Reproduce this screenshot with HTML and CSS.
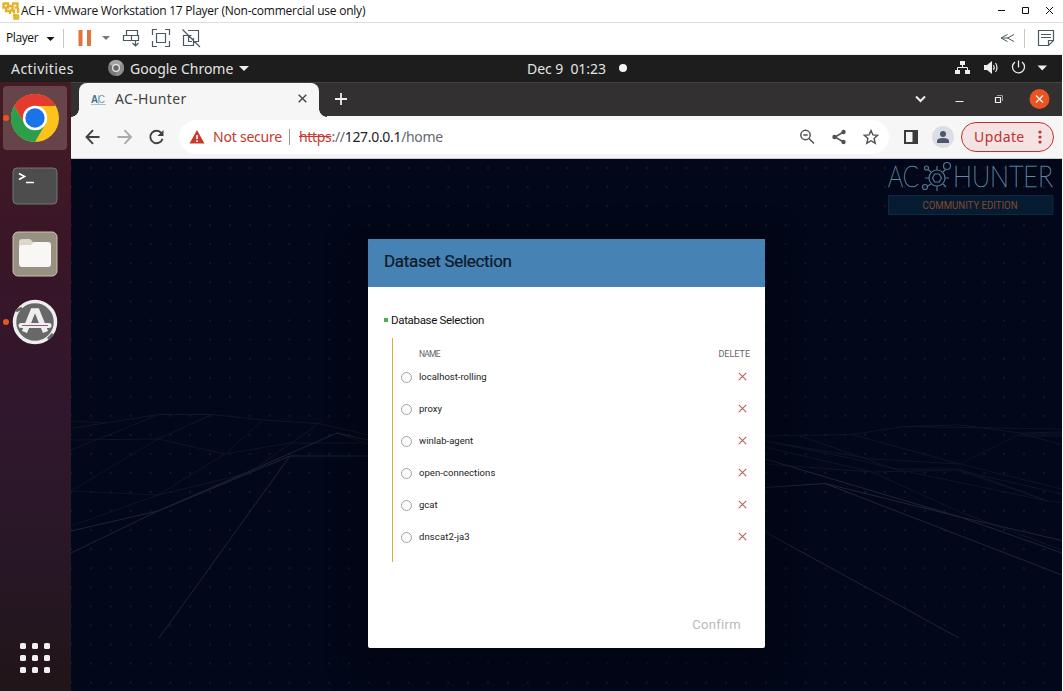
FILE: index.html
```
<!DOCTYPE html>
<html lang="en">
<head>
<meta charset="utf-8">
<title>ACH - VMware Workstation 17 Player</title>
<link rel="stylesheet" href="styles.css">
</head>
<body>
<div class="vm">
  <header class="titlebar">
    <svg class="vm-logo" width="18" height="18" viewBox="0 0 18 18"><path d="M1 1.500H6V5.500H1.500V1M6 4H10.500V8M10 1.500H15.500V5.500H12.500M4 6V9H8V12M8 8.500H12V11.500M16 6V11M11 13.500H16V16.500H12.500V12" fill="none" stroke="#e3b32a" stroke-width="2.400"/></svg>
    <span class="title">ACH - VMware Workstation 17 Player (Non-commercial use only)</span>
    <svg class="win-controls" width="60" height="22" viewBox="0 0 60 22" fill="none" stroke="#111"><path d="M0 10.500H7M24.500 7.500H30.500V13.500H24.500ZM48 7L55 14M55 7L48 14"/></svg>
  </header>
  <div class="vm-toolbar">
    <span class="player">Player</span>
    <svg class="tools" width="164" height="31" viewBox="0 0 164 31" fill="none">
      <path d="M6.500 14H14.500L10.500 18Z" fill="#111"/>
      <path d="M23.500 6V25" stroke="#c6c6c6"/>
      <path d="M38.500 7H42.500V23H38.500ZM47 7H51V23H47Z" fill="#e2733a"/>
      <path d="M62 13H70L66 17Z" fill="#777"/>
      <g stroke="#4a5860" stroke-width="1.200"><path d="M86.500 7.500H97.500V12.500H86.500ZM83.500 12.500H91.500V17.500H83.500ZM91.500 12.500H98.500V17.500H91.500ZM95.500 18V23M92.500 20L95.500 23L98.500 20"/>
      <path d="M112.500 12V6.500H117M125 6.500H129.500V12M129.500 18V23.500H125M117 23.500H112.500V18M116.500 10.500H125.500V19.500H116.500Z"/>
      <path d="M148 7.500H158.500V18.500H155M151.500 12.500H143.500V22.500H153.500V15M148.500 12V18.500H152M142.500 6.500L160 24"/></g>
    </svg>
    <svg class="tools-right" width="55" height="31" viewBox="0 0 55 31" fill="none" stroke="#4a5860"><path d="M7.500 11.500L1 15L7.500 18.500M14 11.500L7.500 15L14 18.500M1 15H8"/><path d="M24.500 6V25" stroke="#c6c6c6"/><path d="M38.500 7.500H53.500V17.500L48.500 22.500H38.500ZM48.500 22.500V17.500H53.500M41 11.500H51M41 14.500H51" stroke-width="1.200"/></svg>
  </div>
  <div class="gnome-bar">
    <span class="activities">Activities</span>
    <svg class="app-mark" width="16" height="16" viewBox="0 0 16 16"><circle cx="8" cy="8" r="8" fill="#777"/><path d="M8 8L1 4A8 8 0 0 1 15 4Z" fill="#a3a3a3"/><path d="M8 8L15 4A8 8 0 0 1 8 16Z" fill="#8d8d8d"/><circle cx="8" cy="8" r="4" fill="#e5e5e5"/><circle cx="8" cy="8" r="2.700" fill="#686868"/></svg>
    <span class="app-name">Google Chrome</span><i class="caret"></i>
    <span class="clock">Dec 9&nbsp; 01:23</span><i class="notice"></i>
    <svg class="status" width="94" height="20" viewBox="0 0 94 20" fill="none" stroke="#eee">
      <path d="M6 3H11V7H6ZM1 12H6V16H1ZM11 12H16V16H11Z" fill="#eee" stroke="none"/><path d="M8.500 7V9.500M3.500 12V9.500H13.500V12"/>
      <path d="M30 7H33L38 3V16L33 12H30Z" fill="#eee" stroke="none"/><path d="M39.500 7Q41 9.500 39.500 12M41.500 5Q44.500 9.500 41.500 14" stroke-width="1.100"/>
      <path d="M61 4A6 6 0 1 0 68 4M64.500 2.500V9.500" stroke-width="1.300"/><path d="M83.500 7.500H93L88.300 12.500Z" fill="#eee" stroke="none"/>
    </svg>
  </div>
  <div class="desktop">
    <nav class="dock">
      <div class="launcher active running"><svg width="48" height="48" viewBox="0 0 48 48"><circle cx="24" cy="24" r="24" fill="#fcc31b"/><path d="M24 12H44.800A24 24 0 0 0 3.200 12L13.600 30L24 24Z" fill="#e33b2e"/><path d="M3.200 12A24 24 0 0 0 24 48L34.400 30L24 24L13.600 30Z" fill="#2b9f4b"/><circle cx="24" cy="24" r="12.200" fill="#fff"/><circle cx="24" cy="24" r="9.700" fill="#1a73e8"/></svg></div>
      <div class="launcher"><svg width="46" height="38" viewBox="0 0 46 38"><rect x="1" y="1" width="44" height="36" rx="4" fill="#4d4d4d" stroke="#747474"/><path d="M7 6.500L12.500 9.500L7 12.500M14 15.500H22" fill="none" stroke="#fff" stroke-width="1.700"/></svg></div>
      <div class="launcher"><svg width="46" height="46" viewBox="0 0 46 46"><rect x="1" y="1" width="44" height="44" rx="5" fill="#989080" stroke="#c9c3b0"/><path d="M7 20V11Q7 8 10 8H18L22 12H36V20Z" fill="#ddd8cc"/><path d="M10 14H19L22 11H36Q39 11 39 14V33Q39 36 36 36H10Q7 36 7 33V17Q7 14 10 14Z" fill="#f8f7f5"/></svg></div>
      <div class="launcher running"><svg width="46" height="46" viewBox="0 0 46 46"><circle cx="23" cy="23" r="20.500" fill="#686868" stroke="#eee" stroke-width="3.500"/><path d="M4 12L10 9M36 40L41 35" stroke="#666" stroke-width="3"/><path d="M12.500 33L21 12H25L33.500 33" fill="none" stroke="#eee" stroke-width="5.500"/><path d="M9 26.500H37" stroke="#eee" stroke-width="5" stroke-linecap="round"/><path d="M10 26.500H36" stroke="#965988" stroke-width="1"/></svg></div>
      <div class="apps"><i></i><i></i><i></i><i></i><i></i><i></i><i></i><i></i><i></i></div>
    </nav>
    <section class="browser">
      <div class="tabstrip">
        <div class="tab">
          <svg class="favicon" width="17" height="14" viewBox="0 0 17 14"><text x="1" y="11" textLength="14" lengthAdjust="spacingAndGlyphs" class="fav-text"><tspan class="fav-a">A</tspan>C</text><path d="M1 12.500H16M8.500 3V13" stroke="#94abb5" stroke-width=".7"/></svg>
          <span class="tab-title">AC-Hunter</span>
          <svg width="9" height="9" viewBox="0 0 9 9"><path d="M.7.7L8.300 8.300M8.300.7L.7 8.300" stroke="#444" stroke-width="1.400"/></svg>
        </div>
        <svg class="new-tab" width="12" height="12" viewBox="0 0 12 12"><path d="M6 0V12M0 6H12" stroke="#eee" stroke-width="1.800"/></svg>
        <svg class="tab-controls" width="138" height="34" viewBox="0 0 138 34" fill="none" stroke="#eee"><path d="M1 14.500L5.500 19L10 14.500" stroke-width="2"/><path d="M40.500 19.500H48.500M80.500 15.500H85.500V20.500H80.500Z" stroke-width="1.200"/><path d="M82 13.500H87.500V19" stroke="#999"/><circle cx="124.500" cy="17" r="10" fill="#e95420" stroke="none"/><path d="M121 13.500L128 20.500M128 13.500L121 20.500" stroke-width="1.400"/></svg>
      </div>
      <div class="navbar">
        <svg class="nav-icons" width="80" height="16" viewBox="0 0 80 16" fill="none" stroke="#3f4043" stroke-width="1.900"><path d="M14.500 8H1.500M8 1.200L1.500 8L8 14.800"/><path d="M32.500 8H46M39.500 1.200L46 8L39.500 14.800" stroke="#a9abad"/><path d="M76.500 4.300A6.200 6.200 0 1 0 77.500 9.700"/><path d="M72.500 7H78.500V1Z" fill="#3f4043" stroke="none"/></svg>
        <div class="omnibox">
          <svg width="16" height="14" viewBox="0 0 16 14"><path d="M8 0L15.500 13.500H.5Z" fill="#c5392e"/><path d="M8 5V9M8 10.200V12" stroke="#fff" stroke-width="1.600"/></svg>
          <span class="unsafe">Not secure</span><i class="divider"></i>
          <span class="url"><s>https</s><span class="path">://</span>127.0.0.1<span class="path">/home</span></span>
          <svg class="url-icons" width="80" height="18" viewBox="0 0 80 18" fill="none" stroke="#505356" stroke-width="1.500"><circle cx="6.500" cy="7" r="4.700"/><path d="M10 10.500L15 15.500M4.300 7H8.700"/><path d="M44.500 4L36 9L44.500 14"/><g fill="#505356" stroke="none"><circle cx="44.500" cy="4" r="2.200"/><circle cx="35.500" cy="9" r="2.200"/><circle cx="44.500" cy="14" r="2.200"/></g><path d="M72 2.500L73.900 6.900L78.700 7.300L75.100 10.500L76.200 15.200L72 12.700L67.800 15.200L68.900 10.500L65.300 7.300L70.100 6.900Z" stroke-width="1.400"/></svg>
        </div>
        <svg class="panel" width="14" height="14" viewBox="0 0 14 14"><path d="M0 0H14V14H0ZM2 2V12H8.500V2Z" fill="#3b3c3e" fill-rule="evenodd"/></svg>
        <svg class="avatar" width="22" height="22" viewBox="0 0 22 22"><circle cx="11" cy="11" r="11" fill="#dbdfe5"/><circle cx="11" cy="8" r="3" fill="#4d566a"/><path d="M5 17V15Q5 12 11 12T17 15V17Z" fill="#4d566a"/></svg>
        <div class="update"><span>Update</span><svg width="4" height="14" viewBox="0 0 4 14" fill="#c32f2b"><circle cx="2" cy="2" r="1.600"/><circle cx="2" cy="7" r="1.600"/><circle cx="2" cy="12" r="1.600"/></svg></div>
      </div>
      <main class="page">
        <svg class="terrain" width="991" height="532" viewBox="71 159 991 532" fill="none">
          <defs><pattern id="dots" x="81" y="158.500" width="19.850" height="19.060" patternUnits="userSpaceOnUse"><path d="M9 9.500H11M10 8.500V10.500" stroke="#162230" stroke-width=".8"/></pattern></defs>
          <path fill="url(#dots)" d="M71 159H1062V691H71Z"/>
          <g stroke="#0d1725"><path d="M71 421L106 423M71 428.500L158 414.500H212L263 420L319 423.500L368 435M71 440L158 439L225 454L290 443H368M71 450L158 415M71 491L158 439L212 414.500M71 491L158 495L225 454L263 420M71 526L158 495L249 473L319 423.500M337 433L368 444"/><path d="M765 436L852 434.500L904 426.500L960 425L1020 433L1062 445M904 426.500L1062 429M1062 434H1020L960 464L852 434.500M765 441L850 458L895 469H960L1048 501M800 436L895 469M765 447L872 472L960 512L1062 550M765 464L872 472L957 470L1062 494M765 441L872 459L960 464L1062 489M957 470L1048 501L1062 502.500M895 469L1048 501M1020 433L1062 432M1020 436L1062 436"/></g>
          <g stroke="#1b2734"><path d="M71 531L158 511L337 433L368 440M71 553L158 511L290 456H368M290 456L159 638"/><path d="M765 487.500L825 483.500L1062 575M825 483.500L960 517L1062 540.500M765 459L960 517L1062 553M765 532L959 638"/></g>
        </svg>
        <svg class="brand" width="175" height="58" viewBox="887 159 175 58">
          <g class="brand-word"><text x="888" y="187" textLength="31" lengthAdjust="spacingAndGlyphs">AC</text><text x="953" y="187" textLength="100" lengthAdjust="spacingAndGlyphs">HUNTER</text></g>
          <g fill="none" stroke="#55758f" stroke-width="1.200"><circle cx="937" cy="178" r="8"/><path d="M932.500 178L934.700 174H939.300L941.500 178L939.300 182H934.700ZM937 166V170M937 186V191M925 178H929M945 178H949M943 172L945.500 169.500M931 184L927 186.500M943 184L946 187M931 172L928 169.500"/><circle cx="947" cy="166" r="3.500"/><circle cx="926.500" cy="168" r="2"/><circle cx="925" cy="187" r="2.500"/></g>
          <path d="M888.500 195.500H1053V214.500H888.500Z" fill="#061c32" stroke="#0b2b41"/>
          <text class="edition" x="922.500" y="208.500" textLength="95" lengthAdjust="spacingAndGlyphs">COMMUNITY EDITION</text>
        </svg>
        <div class="dialog">
          <h1>Dataset Selection</h1>
          <div class="dialog-body">
            <h2><i></i><span>Database Selection</span></h2>
            <div class="datasets">
              <div class="head"><span class="h-name">NAME</span><span class="h-del">DELETE</span></div>
              <div class="row"><i class="radio"></i><span class="r1">localhost-rolling</span><svg width="9" height="9" viewBox="0 0 9 9"><path d="M.8.8L8.200 8.200M8.200.8L.8 8.200"/></svg></div>
              <div class="row"><i class="radio"></i><span class="r2">proxy</span><svg width="9" height="9" viewBox="0 0 9 9"><path d="M.8.8L8.200 8.200M8.200.8L.8 8.200"/></svg></div>
              <div class="row"><i class="radio"></i><span class="r3">winlab-agent</span><svg width="9" height="9" viewBox="0 0 9 9"><path d="M.8.8L8.200 8.200M8.200.8L.8 8.200"/></svg></div>
              <div class="row"><i class="radio"></i><span class="r4">open-connections</span><svg width="9" height="9" viewBox="0 0 9 9"><path d="M.8.8L8.200 8.200M8.200.8L.8 8.200"/></svg></div>
              <div class="row"><i class="radio"></i><span class="r5">gcat</span><svg width="9" height="9" viewBox="0 0 9 9"><path d="M.8.8L8.200 8.200M8.200.8L.8 8.200"/></svg></div>
              <div class="row"><i class="radio"></i><span class="r6">dnscat2-ja3</span><svg width="9" height="9" viewBox="0 0 9 9"><path d="M.8.8L8.200 8.200M8.200.8L.8 8.200"/></svg></div>
            </div>
            <div class="confirm">Confirm</div>
          </div>
        </div>
      </main>
    </section>
  </div>
</div>
</body>
</html>
```
FILE: styles.css
```
* { box-sizing: border-box; }
body { margin: 0; background: #fff; overflow: hidden; }
svg { display: block; flex: none; }
span { white-space: nowrap; }
.vm { width: 1063px; height: 691px; display: flex; flex-direction: column; }
.titlebar { height: 23px; display: flex; align-items: center; padding-left: 2px; border-bottom: 1px solid #dedede; }
.title { margin-left: 1px; font: 12px/22px "Open Sans", sans-serif; letter-spacing: -.23px; color: #111; }
.win-controls { margin-left: auto; margin-right: 5px; }
.vm-toolbar { height: 32px; display: flex; padding-left: 6px; border-bottom: 1px solid #eee; }
.player { width: 34px; font: 12px/30px "Open Sans", sans-serif; letter-spacing: -.4px; color: #111; }
.tools-right { margin-left: auto; margin-right: 8px; }
.gnome-bar { height: 27px; width: 1062px; background: #1d1d1d; color: #e4e4e4; display: flex; align-items: center; padding: 0 0 1px 11px; font: 14px/26px "Noto Sans", sans-serif; }
.gnome-bar span { padding-top: 1px; }
.activities { width: 97px; letter-spacing: .45px; }
.app-name { margin-left: 6px; width: 104px; }
.caret { margin-left: 5px; border: 5px solid transparent; border-top-color: #eee; border-bottom: 0; }
.clock { margin-left: 278px; width: 80px; letter-spacing: -.05px; }
.notice { width: 8px; height: 8px; border-radius: 50%; background: #f2f2f2; margin-left: 12px; }
.status { margin-left: auto; margin-right: 14px; }
.desktop { flex: 1; display: flex; width: 1062px; }
.dock { width: 71px; background: linear-gradient(#451c24, #391527 28%, #30172d 55%, #271725 80%, #201519); display: flex; flex-direction: column; align-items: center; padding: 4px 1px 18px 0; }
.launcher { position: relative; width: 64px; height: 64px; margin-bottom: 4px; display: grid; place-items: center; }
.active { background: #664449; border-radius: 4px; }
.running::before { content: ""; position: absolute; left: 0; top: 29px; width: 6px; height: 6px; border-radius: 50%; background: #e95420; }
.apps { margin-top: auto; display: grid; grid-template-columns: repeat(3, 6px); gap: 6px; }
.apps i { height: 6px; border-radius: 1.5px; background: #f2eff0; }
.browser { flex: 1; display: flex; flex-direction: column; }
.tabstrip { height: 34px; background: #323031; border-top: 1px solid #444; display: flex; align-items: center; }
.tab { position: relative; width: 240px; height: 34px; margin-left: 8px; padding: 0 12px 2px 11px; border-radius: 8px 8px 0 0; background: #f6f6f6; display: flex; align-items: center; }
.tab::before, .tab::after { content: ""; position: absolute; bottom: 0; width: 8px; height: 8px; }
.tab::before { left: -8px; background: radial-gradient(circle at 0 0, #323031 7.5px, #f6f6f6 8px); }
.tab::after { right: -8px; background: radial-gradient(circle at 100% 0, #323031 7.5px, #f6f6f6 8px); }
.fav-text { font: 10px "Liberation Sans", sans-serif; fill: #7898a5; }
.fav-a { font-weight: bold; fill: #39738a; }
.tab-title { margin: 0 auto 0 8px; font: 14px/20px "Noto Sans", sans-serif; letter-spacing: .35px; color: #434345; }
.new-tab { margin: 0 0 2px 16px; }
.tab-controls { margin: 0 9px 2px auto; }
.navbar { height: 43px; display: flex; align-items: center; background: #f6f6f6; border-bottom: 1px solid #c9ccd1; padding: 0 8px 0 14px; }
.omnibox { width: 710px; height: 34px; margin-left: 14px; padding: 0 7px 0 10px; border-radius: 17px; background: #fff; display: flex; align-items: center; font: 14px/20px "Noto Sans", sans-serif; }
.unsafe { margin-left: 8px; width: 69px; letter-spacing: -.22px; color: #c5392e; }
.divider { width: 1px; height: 16px; margin: 0 9px 0 7px; background: #999; }
.url { color: #242527; letter-spacing: -.32px; }
.url s { color: #c5392e; }
.path { color: #65686b; }
.url-icons { margin-left: auto; margin-right: 3px; }
.panel { margin-left: 15px; }
.avatar { margin-left: 14px; }
.update { width: 93px; height: 30px; margin-left: 7px; padding: 0 11px 0 12px; border: 1.5px solid #c32f2b; border-radius: 15px; background: #f5e3e4; color: #c32f2b; display: flex; align-items: center; justify-content: space-between; font: 14px/20px "Noto Sans", sans-serif; letter-spacing: .4px; }
.page { position: relative; flex: 1; background: #020719; overflow: hidden; display: flex; justify-content: center; align-items: flex-start; padding-top: 80px; }
.terrain { position: absolute; left: 0; top: 0; }
.brand { position: absolute; right: 0; top: 0; overflow: visible; }
.brand-word { font: 100 29px Lato, sans-serif; fill: #6488a4; stroke: #6488a4; stroke-width: .55px; }
.edition { font: 11px Roboto, sans-serif; fill: #87462f; }
.dialog { position: relative; width: 397px; height: 409px; background: #fff; border-radius: 2px; overflow: visible; font-family: Roboto, sans-serif; box-shadow: 0 10px 28px 12px rgba(0, 5, 16, .55); }
h1 { height: 48px; margin: 0; padding-left: 16px; border-radius: 2px 2px 0 0; background: #4682b4; font: 17px/45px Roboto, sans-serif; letter-spacing: -.3px; color: #0c1826; -webkit-text-stroke: .2px #0c1826; }
.dialog-body { height: 361px; display: flex; flex-direction: column; padding: 25px 15px 15px 16px; }
h2 { height: 16px; margin: 0; display: flex; align-items: center; gap: 3px; font: 11.5px/16px Roboto, sans-serif; letter-spacing: -.32px; color: #111; }
h2 i { width: 4px; height: 4px; background: #4caf50; }
.datasets { height: 224px; margin: 10px 0 0 8px; border-left: 1px solid #d9ad38; padding: 8px 0 0 8px; color: #222; font-size: 9.500px; }
.head { height: 15px; display: flex; justify-content: space-between; align-items: center; padding-left: 18px; color: #666; font-size: 9px; }
.h-name { font-size: 8.500px; letter-spacing: -.8px; }
.row { height: 32px; display: flex; align-items: center; }
.row span { padding-bottom: 2px; }
.row svg { margin: 0 3px 2px auto; stroke: #c2605a; stroke-width: 1.100px; }
.r4 { letter-spacing: .05px; }
.r6 { letter-spacing: .12px; }
.radio { width: 11px; height: 11px; border: 1px solid #a0a0a0; border-radius: 50%; margin: 0 7px 0 0; }
.confirm { margin-top: auto; align-self: flex-end; padding-right: 9px; font-size: 13px; line-height: 17px; color: #b9b9b9; letter-spacing: .3px; }
```
